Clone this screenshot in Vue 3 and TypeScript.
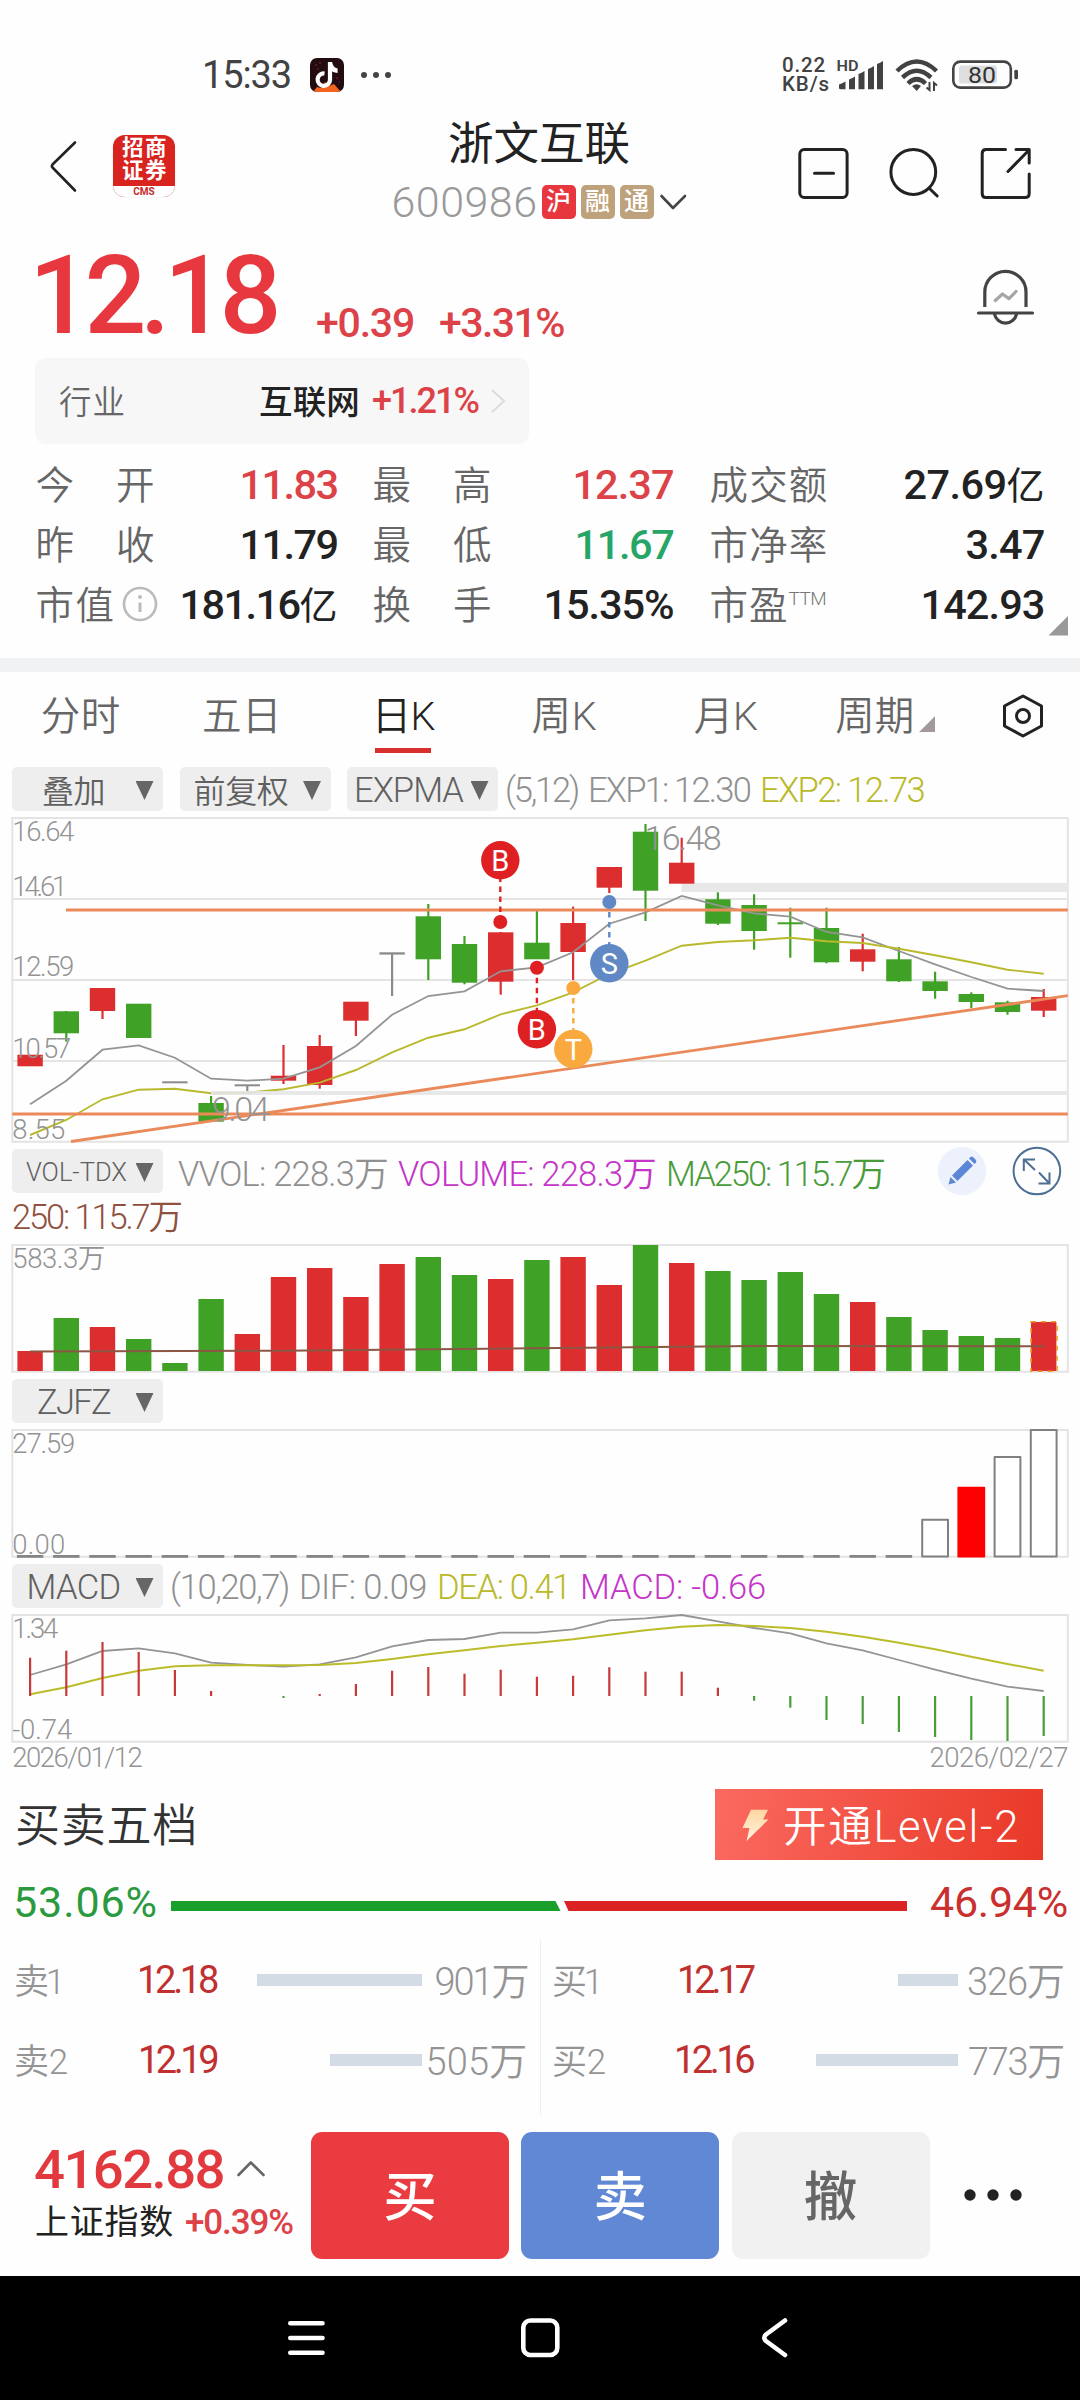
<script setup lang="ts">
import type { DirectiveBinding } from 'vue'

// Tracks text out (or in) so that it fills the given advance width.
const vFit = {
  mounted(el: HTMLElement, binding: DirectiveBinding<number>) {
    const count = [...(el.textContent ?? '')].length
    const natural = el.getBoundingClientRect().width
    el.style.letterSpacing = `${(binding.value - natural) / count}px`
  },
}

type Tone = 'up' | 'down' | 'flat'
interface Candle { tone: Tone; top: number; bottom: number; high?: number; low?: number }

const cx = (i: number): number => 30.1 + 36.2 * i
const line = (ys: number[]): string => ys.map((y, i) => `${cx(i).toFixed(1)},${y}`).join(' ')

const c = (tone: Tone, top: number, bottom: number, high?: number, low?: number): Candle => ({ tone, top, bottom, high, low })
const candles: Candle[] = [
  c('up', 1054.7, 1066.3), c('down', 1011.3, 1033.3, 1011, 1041.7), c('up', 988, 1011, 988, 1019),
  c('down', 1003.7, 1038), c('flat', 1081.3, 1083.3), c('down', 1103, 1121.7, 1096, 1121),
  c('flat', 1084.3, 1086.3, 1085, 1091), c('up', 1075.7, 1080.7, 1045, 1084), c('up', 1046, 1085, 1035, 1088.7),
  c('up', 1001.7, 1020.7, 1002, 1036), c('flat', 952.3, 954.6, 953, 996), c('down', 916.3, 959.3, 904, 980),
  c('down', 944, 982.7, 936, 984.3), c('up', 932.3, 981.7, 932, 994.7), c('down', 942.7, 959.3, 909.3, 959),
  c('up', 923, 952, 906.7, 980), c('up', 867, 887.7, 867, 893), c('down', 831.7, 890.7, 824, 921),
  c('up', 862.7, 883.7, 837.7, 883), c('down', 899.3, 923.7, 892.3, 925), c('down', 905, 931, 894.3, 949.7),
  c('down', 922.3, 924.3, 907.7, 957.7), c('down', 928, 962.3, 907.7, 963.3), c('up', 949.3, 961.7, 933.7, 971.3),
  c('down', 959.3, 981.3, 947, 982), c('down', 981.3, 991, 971.7, 998.7), c('down', 994, 1002, 992.3, 1008),
  c('down', 1002.3, 1012, 1000.7, 1014.7), c('up', 997, 1010.7, 989, 1017),
]
const exp1 = line([1104.3, 1080.7, 1049.7, 1045.3, 1057.7, 1078.7, 1080.7, 1078.7, 1067.3, 1046, 1014.7, 996, 991.3, 971.3, 967.3, 952.3, 923.7, 912.3, 896, 905.3, 913.3, 916.7, 932, 937.3, 951, 964.3, 977, 988.7, 991])
const exp2 = line([1135, 1120, 1099.3, 1089.7, 1088.7, 1093.3, 1092.7, 1089.3, 1082.7, 1070, 1052.3, 1037.7, 1029.3, 1014.3, 1005.3, 992.3, 974, 960.7, 945.7, 942, 940.3, 937.7, 941.3, 943, 948.7, 955.3, 962.3, 969.7, 973.7])

const pins = [
  { x: 500.3, y: 860.3, dot: 922, color: '#de2022', label: 'B' },
  { x: 536.9, y: 1029.3, dot: 967.7, color: '#de2022', label: 'B' },
  { x: 609.3, y: 963.3, dot: 902, color: '#5f88c4', label: 'S' },
  { x: 573.3, y: 1049, dot: 988, color: '#f9a93d', label: 'T' },
]
const priceScale = [
  { v: '16.64', y: 841.3, w: 61 }, { v: '14.61', y: 895.7, w: 54 }, { v: '12.59', y: 976.3, w: 61 },
  { v: '10.57', y: 1057.7, w: 58 }, { v: '8.55', y: 1139, w: 52 },
]

const volTops = [1351, 1318, 1327, 1339, 1363, 1299, 1334, 1277, 1268, 1297, 1264, 1257, 1275, 1279, 1260, 1257, 1285, 1245, 1263, 1271, 1280, 1272, 1294, 1302, 1317, 1330, 1336, 1338, 1322]
const volUp = new Set([0, 2, 6, 7, 8, 9, 10, 13, 15, 16, 18, 23, 28])
const zjBars = [
  { i: 25, top: 1519.7, fill: '#fff', stroke: '#808080' }, { i: 26, top: 1487.7, fill: '#f00', stroke: '#f00' },
  { i: 27, top: 1457, fill: '#fff', stroke: '#808080' }, { i: 28, top: 1430, fill: '#fff', stroke: '#808080' },
]
const hist = [1657.7, 1650.7, 1642, 1652, 1670, 1691, 1696, 1698, 1694, 1684, 1670.7, 1667, 1673.7, 1669.7, 1676.7, 1675.7, 1667.3, 1671.7, 1671.7, 1687.7, 1700.7, 1707.7, 1720, 1724, 1732, 1737, 1740, 1741, 1736]
const dif = line([1675, 1664.3, 1651, 1648.3, 1653.3, 1662.7, 1665, 1666.7, 1664.3, 1657.3, 1646.3, 1640, 1639, 1632.7, 1632.7, 1629.3, 1620.3, 1618.3, 1615, 1621.3, 1628, 1633.3, 1643.3, 1650.3, 1660, 1669.7, 1678.7, 1686.7, 1691])
const dea = line([1694.3, 1687.3, 1678, 1670.7, 1666.3, 1665.3, 1665.3, 1665.3, 1665, 1663, 1659, 1654.3, 1650.3, 1646, 1642.7, 1639.3, 1634.7, 1630.3, 1626.7, 1625, 1626, 1628, 1631.7, 1636.7, 1642.7, 1649.3, 1656.7, 1664, 1670.7])

const tabs = [
  { name: '分时', w: 80 }, { name: '五日', w: 80 }, { name: '日K', w: 63, on: true },
  { name: '周K', w: 66 }, { name: '月K', w: 64 }, { name: '周期', w: 79, more: true },
]
const books = [
  [
    { side: '卖1', sw: 48, price: '12.18', pw: 79, bar: 165, vol: '901万', vw: 93 },
    { side: '卖2', sw: 54, price: '12.19', pw: 78, bar: 92, vol: '505万', vw: 102 },
  ],
  [
    { side: '买1', sw: 48, price: '12.17', pw: 75, bar: 60, vol: '326万', vw: 97 },
    { side: '买2', sw: 54, price: '12.16', pw: 78, bar: 142, vol: '773万', vw: 96 },
  ],
]
</script>

<template>
  <div class="phone">
    <header class="status">
      <span v-fit="89" class="t clock">15:33</span>
      <svg class="app" width="34" height="34" viewBox="0 0 34 34">
        <defs><clipPath id="appclip"><rect width="34" height="34" rx="7" /></clipPath></defs>
        <g clip-path="url(#appclip)">
          <rect width="34" height="34" fill="#230c10" />
          <path d="M3 34 L7 29 L11 30 L15 24 L19 28 L24 26 L31 34 Z" fill="#f4621f" />
          <path d="M5 7h2M9 5h2M7 11h2M26 20h2M29 24h1" stroke="#8d2426" stroke-width="1" />
        </g>
        <path d="M20 4 V21.5 A6.2 6.2 0 1 1 14.5 15.5" fill="none" stroke="#fff" stroke-width="4.2" />
        <path d="M18 4 H22 Q23 9.500 27.600 10.500 V15 Q22 14.500 18.500 10.500 Z" fill="#fff" />
      </svg>
      <svg class="more-dots" width="32" height="8" viewBox="0 0 32 8" fill="#444">
        <circle cx="4" cy="4" r="3" /><circle cx="16" cy="4" r="3" /><circle cx="28" cy="4" r="3" />
      </svg>
      <div class="net">
        <span v-fit="44" class="t">0.22</span>
        <span v-fit="48" class="t">KB/s</span>
      </div>
      <svg class="signals" width="184" height="40" viewBox="836 55 184 40">
        <text x="836.5" y="70.7" font-size="15" font-weight="600" fill="#444" textLength="22" lengthAdjust="spacingAndGlyphs">HD</text>
        <g fill="#424242">
          <path d="M839 84.500 q3-1 6.500-3 V89.300 H840.500 q-1.500 0-1.500-1.500Z" />
          <path d="M849 79.500 q3-1 6-3 V89.300 H849Z" /><path d="M858.500 74 q3-1 6-3 V89.300 H858.500Z" />
          <path d="M868 69 q3-1 6-3 V89.300 H868Z" /><path d="M877 64 q3-1 6-3 V89.300 H877Z" />
        </g>
        <g fill="none" stroke="#424242" stroke-width="4.500">
          <path d="M897 71 Q916.700 52 936.500 71" /><path d="M902.500 77.500 Q916.700 64 931 77.500" />
          <path d="M908 83.500 Q916.700 75 925.500 83.500" />
        </g>
        <path d="M912 86 Q916.700 82.500 921 86 L916.700 91Z" fill="#424242" />
        <path d="M929.500 82 V90 L926.500 87.500 M934 91 V83 L937 85.500" fill="none" stroke="#424242" stroke-width="2" />
        <rect x="953.300" y="61.600" width="57.500" height="26" rx="7" fill="none" stroke="#444" stroke-width="2.600" />
        <rect x="959" y="65.500" width="38" height="18" rx="3" fill="#dedede" />
        <rect x="1014.300" y="69.700" width="3.700" height="9.600" rx="1.500" fill="#444" />
        <text x="968" y="82.600" font-size="22.500" fill="#333" textLength="28" lengthAdjust="spacingAndGlyphs">80</text>
      </svg>
    </header>

    <nav class="top">
      <svg width="30" height="54" viewBox="48 139 30 54" fill="none" stroke="#222" stroke-width="2.600" stroke-linecap="round" stroke-linejoin="round">
        <path d="M75 142.500 L52.500 164.500 Q51.200 166 52.500 167.500 L75 190.500" />
      </svg>
      <div class="broker">
        <div class="broker-cn">招商<br />证券</div>
        <div class="broker-en">CMS</div>
      </div>
      <div class="title">
        <h1 v-fit="182" class="t">浙文互联</h1>
        <div class="code">
          <span v-fit="146" class="t">600986</span>
          <i class="tag red">沪</i><i class="tag">融</i><i class="tag">通</i>
          <svg width="28" height="18" viewBox="660 193 28 18" fill="none" stroke="#444" stroke-width="2.600" stroke-linecap="round" stroke-linejoin="round"><path d="M662.500 196 L674 208 L686 196" /></svg>
        </div>
      </div>
      <svg class="acts" width="236" height="56" viewBox="797 146 236 56" fill="none" stroke="#222" stroke-width="3" stroke-linecap="round" stroke-linejoin="round">
        <rect x="799.800" y="149.500" width="47.300" height="48" rx="4.500" />
        <path d="M814.500 173.300 H833.500" />
        <circle cx="913.300" cy="172" r="22.400" /><path d="M929.500 188.500 L937.200 196" />
        <path d="M1005.500 149.500 H986 Q982.200 149.500 982.200 153.500 V193.500 Q982.200 197.500 986 197.500 H1025 Q1029.200 197.500 1029.200 193.500 V174" />
        <path d="M1016 149.500 H1029.200 V163 M1029 150 L1008 171.500" />
      </svg>
    </nav>

    <section class="quote">
      <strong v-fit="246" class="t price">12.18</strong>
      <span v-fit="98" class="t chg">+0.39</span>
      <span v-fit="125" class="t chg">+3.31%</span>
      <svg class="bell" width="62" height="62" viewBox="975 267 62 62" fill="none" stroke="#444" stroke-width="3.200" stroke-linecap="round">
        <path d="M984.800 307 V292 A20.600 20.600 0 0 1 1026 292 V307" stroke-linecap="butt" />
        <path d="M978.500 313 H1032.500" /><path d="M994.500 314 A11.200 11.200 0 0 0 1016.500 314" />
        <path d="M995.300 300.500 L1002.500 294 L1009 298.700 L1016 291.500" stroke="#a5a5a5" stroke-linejoin="round" />
      </svg>
    </section>

    <section class="industry">
      <span v-fit="67" class="t ind-l">行业</span>
      <span v-fit="101" class="t ind-n">互联网</span>
      <span v-fit="106" class="t ind-p">+1.21%</span>
      <svg width="16" height="26" viewBox="490.500 388 16 26" fill="none" stroke="#dcdcdc" stroke-width="2"><path d="M492.400 390 L504.500 401 L492.400 412.300" /></svg>
    </section>

    <section class="stats">
      <div class="col c1">
        <div><label class="wide"><b>今</b><b>开</b></label><span v-fit="98" class="t v up">11.83</span></div>
        <div><label class="wide"><b>昨</b><b>收</b></label><span v-fit="98" class="t v">11.79</span></div>
        <div>
          <label v-fit="80" class="t">市值</label>
          <svg class="info" width="38" height="38" viewBox="0 0 38 38"><circle cx="19" cy="19" r="16" fill="none" stroke="#bbb" stroke-width="2.600" /><circle cx="19" cy="12" r="2" fill="#bbb" /><path d="M19 17.500V27" stroke="#bbb" stroke-width="3" /></svg>
          <span class="v push"><span v-fit="120" class="t">181.16</span><em>亿</em></span>
        </div>
      </div>
      <div class="col c2">
        <div><label class="wide"><b>最</b><b>高</b></label><span v-fit="101" class="t v up">12.37</span></div>
        <div><label class="wide"><b>最</b><b>低</b></label><span v-fit="99" class="t v down">11.67</span></div>
        <div><label class="wide"><b>换</b><b>手</b></label><span v-fit="130" class="t v">15.35%</span></div>
      </div>
      <div class="col c3">
        <div><label v-fit="119" class="t">成交额</label><span class="v"><span v-fit="103" class="t">27.69</span><em>亿</em></span></div>
        <div><label v-fit="119" class="t">市净率</label><span v-fit="79" class="t v">3.47</span></div>
        <div><label v-fit="79" class="t">市盈</label><sup>TTM</sup><span v-fit="124" class="t v push">142.93</span></div>
      </div>
      <i class="corner"></i>
    </section>

    <div class="band"></div>

    <nav class="tabs">
      <div v-for="tab in tabs" :key="tab.name" class="tab" :class="{ on: tab.on }">
        <span v-fit="tab.w" class="t">{{ tab.name }}</span><i v-if="tab.more"></i>
      </div>
      <svg width="46" height="50" viewBox="1000.500 690.500 46 50" fill="none" stroke="#222" stroke-width="3" stroke-linejoin="round">
        <path d="M1023.500 695.500 L1042 705.500 V725.500 L1023.500 735.500 L1005 725.500 V705.500Z" /><circle cx="1023.500" cy="715.500" r="6.500" />
      </svg>
    </nav>

    <div class="bar first">
      <button><span v-fit="63" class="t">叠加</span><i></i></button>
      <button class="mid"><span v-fit="95" class="t">前复权</span><i></i></button>
      <button><span v-fit="109" class="t">EXPMA</span><i></i></button>
      <div class="legend l1">
        <span v-fit="73" class="t">(5,12)</span><span v-fit="162" class="t">EXP1: 12.30</span><span v-fit="164" class="t yel">EXP2: 12.73</span>
      </div>
    </div>

    <svg class="chart" width="1080" height="338" viewBox="0 811 1080 338">
      <path d="M12.300 818 H1067.800 V1141.700 H12.300Z M12.300 899 H1067.800 M12.300 980 H1067.800 M12.300 1061 H1067.800" class="frame" />
      <rect x="681.500" y="883" width="386.500" height="9" fill="#e8e8e8" />
      <g v-for="(k, i) in candles" :key="i" :class="k.tone">
        <rect v-if="k.high" :x="cx(i) - 1.1" :y="k.high" width="2.200" :height="k.low! - k.high" />
        <rect :x="cx(i) - 12.700" :y="k.top" width="25.400" :height="k.bottom - k.top" />
      </g>
      <polyline :points="exp1" fill="none" stroke="#949494" stroke-width="1.800" />
      <polyline :points="exp2" fill="none" stroke="#b9b92e" stroke-width="1.900" />
      <path d="M211 1093 H1067.800" stroke="#e6e6e6" stroke-width="4" opacity=".9" />
      <g stroke="#ea8a5b" stroke-width="2.800"><path d="M66 910 H1067.800" /><path d="M12.300 1114 H1067.800" /><path d="M71 1141.500 L1067.800 995.700" /></g>
      <g v-for="p in pins" :key="p.x">
        <path :d="`M${p.x} ${p.dot} V${p.y}`" :stroke="p.color" stroke-width="2.400" stroke-dasharray="5.500 4.500" />
        <circle :cx="p.x" :cy="p.dot" r="7" :fill="p.color" /><circle :cx="p.x" :cy="p.y" r="19.200" :fill="p.color" />
        <text :x="p.x" :y="p.y + 10.500" font-size="29" fill="#fff" text-anchor="middle">{{ p.label }}</text>
      </g>
      <g class="scale">
        <text v-for="s in priceScale" :key="s.v" x="12.300" :y="s.y" :textLength="s.w + 1">{{ s.v }}</text>
        <text x="212" y="1121" class="mark" textLength="57.500">9.04</text>
        <text x="644.500" y="849.700" class="mark" textLength="77">16.48</text>
      </g>
    </svg>

    <div class="bar">
      <button><span v-fit="101" class="t sm">VOL-TDX</span><i></i></button>
      <div class="legend l2">
        <span v-fit="210" class="t">VVOL: 228.3万</span><span v-fit="258" class="t mag">VOLUME: 228.3万</span><span v-fit="218" class="t grn">MA250: 115.7万</span>
      </div>
      <svg class="tools" width="126" height="50" viewBox="937 1146 126 50">
        <circle cx="962" cy="1171" r="24.200" fill="#edf1fb" />
        <g fill="#5c86d6"><path d="M948.500 1184.500 L950.500 1177 L956 1182.500Z" /><path d="M952 1175.500 L967.500 1160 L973 1165.500 L957.500 1181Z" /><path d="M969 1158.500 L970.500 1157 Q972 1156 973.500 1157.500 L975.500 1159.500 Q977 1161 976 1162.500 L974.500 1164Z" /></g>
        <g fill="none" stroke="#4c6f94" stroke-width="2"><circle cx="1036.900" cy="1171" r="23.300" /><path d="M1035 1170 L1024 1159.500 M1023.800 1171 V1159.500 H1035 M1039 1172.500 L1049.500 1183.500 M1038.500 1183.500 H1049.500 V1172.500" /></g>
      </svg>
    </div>
    <div class="line2"><span v-fit="169" class="t">250: 115.7万</span></div>

    <svg class="chart" width="1080" height="139" viewBox="0 1240 1080 139">
      <path d="M12.300 1245 H1067.800 V1371.700 H12.300Z" class="frame" />
      <rect v-for="(y, i) in volTops" :key="i" :class="volUp.has(i) ? 'up' : 'down'" :x="cx(i) - 12.700" :y="y" width="25.400" :height="1371 - y" />
      <rect x="1031" y="1321.700" width="26" height="49.600" fill="none" stroke="#ee9a24" stroke-width="1.600" stroke-dasharray="5 5" />
      <polyline points="30,1351.500 283,1350.700 536,1348.300 754,1346 1044,1346.300" fill="none" stroke="#8c5645" stroke-width="2" />
      <text x="12.300" y="1268" class="scale" textLength="93">583.3万</text>
    </svg>

    <div class="bar"><button><span v-fit="73" class="t">ZJFZ</span><i></i></button></div>
    <svg class="chart" width="1080" height="141" viewBox="0 1423 1080 141">
      <path d="M12.300 1430 H1067.800 V1556.700 H12.300Z" class="frame" />
      <g class="scale"><text x="12.300" y="1452.700" textLength="63">27.59</text><text x="12.300" y="1554" textLength="53">0.00</text></g>
      <rect v-for="i in 25" :key="i" :x="cx(i - 1) - 13.200" y="1555" width="26.400" height="2.800" fill="#858585" />
      <rect v-for="b in zjBars" :key="b.i" :x="cx(b.i) - 12.900" :y="b.top" width="25.800" :height="1556.500 - b.top" :fill="b.fill" :stroke="b.stroke" stroke-width="2" stroke-linejoin="round" />
    </svg>

    <div class="bar">
      <button><span v-fit="94" class="t">MACD</span><i></i></button>
      <div class="legend l3">
        <span v-fit="119" class="t">(10,20,7)</span><span v-fit="128" class="t">DIF: 0.09</span><span v-fit="133" class="t yel">DEA: 0.41</span><span v-fit="186" class="t mag">MACD: -0.66</span>
      </div>
    </div>
    <svg class="chart" width="1080" height="169" viewBox="0 1608 1080 169">
      <path d="M12.300 1615 H1067.800 V1741.700 H12.300Z" class="frame" />
      <polyline :points="dif" fill="none" stroke="#949494" stroke-width="1.800" />
      <polyline :points="dea" fill="none" stroke="#bcbc2a" stroke-width="2" />
      <path v-for="(y, i) in hist" :key="i" :d="`M${cx(i)} 1696 V${y}`" :stroke="y < 1696 ? '#c53a3a' : '#4a9c3b'" stroke-width="2.200" />
      <g class="scale">
        <text x="12.300" y="1638" textLength="46">1.34</text><text x="12.300" y="1738.500" textLength="60">-0.74</text>
        <text x="12.300" y="1767" textLength="130.500">2026/01/12</text><text x="929.500" y="1767" textLength="139">2026/02/27</text>
      </g>
    </svg>

    <section class="five">
      <h2 v-fit="183" class="t">买卖五档</h2>
      <button class="level">
        <svg width="28" height="34" viewBox="740 1809 28 34"><defs><linearGradient id="bolt" x1="0" y1="0" x2="0" y2="1"><stop offset="0" stop-color="#ffd7a0" /><stop offset="1" stop-color="#fff3df" /></linearGradient></defs><path d="M750 1810.700 H767 L762 1820.500 H767.500 L745.500 1842 L748.500 1829 H741.500Z" fill="url(#bolt)" /></svg>
        <span v-fit="237" class="t">开通Level-2</span>
      </button>
    </section>

    <section class="ratio">
      <span v-fit="145" class="t buy">53.06%</span>
      <svg width="738" height="10" viewBox="170 1901 738 10"><path d="M171 1901 H555.500 L560.500 1911 H171Z" fill="#19a02c" /><path d="M564 1901 H907 V1911 H568.500Z" fill="#dc2323" /></svg>
      <span v-fit="138" class="t sell">46.94%</span>
    </section>

    <section class="books">
      <div v-for="(book, b) in books" :key="b" class="book">
        <div v-for="r in book" :key="r.side" class="level-row">
          <span class="side"><span v-fit="r.sw" class="t">{{ r.side }}</span></span>
          <span class="cost"><span v-fit="r.pw" class="t">{{ r.price }}</span></span>
          <i :style="{ width: r.bar + 'px' }"></i>
          <span class="qty"><span v-fit="r.vw" class="t">{{ r.vol }}</span></span>
        </div>
      </div>
    </section>

    <footer class="trade">
      <div class="index">
        <div class="idx-top"><span v-fit="190" class="t">4162.88</span><svg width="30" height="18" viewBox="235.500 2161 30 18" fill="none" stroke="#666" stroke-width="2.600" stroke-linejoin="round" stroke-linecap="round"><path d="M238 2176 L250.300 2163.500 L263 2176" /></svg></div>
        <div class="idx-bot"><span v-fit="139" class="t cn">上证指数</span><span v-fit="108" class="t pct">+0.39%</span></div>
      </div>
      <button class="b">买</button><button class="s">卖</button><button class="w">撤</button>
      <svg width="60" height="14" viewBox="963 2188 60 14" fill="#222"><circle cx="970" cy="2195" r="5.700" /><circle cx="993" cy="2195" r="5.700" /><circle cx="1016" cy="2195" r="5.700" /></svg>
    </footer>

    <div class="sys">
      <svg width="1080" height="124" viewBox="0 2276 1080 124" fill="none" stroke="#fff" stroke-width="4.600" stroke-linecap="round" stroke-linejoin="round">
        <path d="M290.300 2323.300 H322.500 M290.300 2338 H322.500 M290.300 2352.700 H322.500" />
        <rect x="523.300" y="2320.500" width="34" height="34.500" rx="7" />
        <path d="M785 2320.500 L766 2334.500 Q762.500 2337.700 766 2341 L785 2355" />
      </svg>
    </div>
  </div>
</template>

<style>
body { margin: 0; background: #fff; }
</style>

<style scoped>
.phone { width: 1080px; height: 2400px; overflow: hidden; display: flex; flex-direction: column; background: #fefefe; color: #222; font-family: Roboto, "Noto Sans CJK SC", sans-serif; }
.phone > * { flex: none; box-sizing: border-box; }
.t { display: inline-block; white-space: nowrap; flex: none; }
button { border: 0; padding: 0; margin: 0; font: inherit; color: inherit; background: none; }
h1, h2 { margin: 0; font-weight: 400; }
i, em { font-style: normal; }
svg { display: block; flex: none; }

.status { height: 110px; padding: 40px 60px 0 202px; display: flex; align-items: center; color: #424242; }
.clock { font-size: 38px; }
.app { margin-left: 19px; }
.more-dots { margin-left: 16px; }
.net { margin: 0 6px 0 390px; width: 48px; flex: none; display: flex; flex-direction: column; font-size: 20.500px; line-height: 19px; font-weight: 500; align-items: flex-start; }

.top { height: 130px; padding-left: 48px; display: flex; align-items: flex-start; }
.top > svg:first-child { margin-top: 29px; }
.broker { width: 62px; height: 62px; margin: 25px 0 0 35px; border-radius: 12px; overflow: hidden; background: #d8231f; box-shadow: 0 0 1px #bbb; display: flex; flex-direction: column; justify-content: space-between; text-align: center; color: #fff; }
.broker-cn { font-size: 21.500px; line-height: 22.500px; letter-spacing: 1.500px; font-weight: 700; padding: 2px 0 0 2px; }
.broker-en { height: 11px; background: #fff; color: #c42a2a; font-size: 10px; line-height: 11px; font-weight: 700; letter-spacing: 0; }
.title { width: 302px; margin-left: 213px; display: flex; flex-direction: column; align-items: center; }
.title h1 { font-size: 45.500px; line-height: 64px; margin-top: 3px; }
.code { display: flex; align-items: center; height: 34px; margin-top: 8px; font-size: 43px; color: #999; font-weight: 300; }
.tag { width: 34px; height: 34px; border-radius: 5px; background: #bea27c; color: #fff; font-size: 25px; line-height: 33px; text-align: center; margin-left: 5px; font-weight: 500; }
.tag.red { background: #e8363f; margin-left: 4px; }
.code svg { margin-left: 5px; }
.acts { margin: 36px 0 0 107px; }

.quote { height: 118px; padding-left: 29px; display: flex; align-items: flex-start; color: #e8383f; }
.price { font-size: 109px; line-height: 112px; font-weight: 500; }
.chg { font-size: 41px; line-height: 48px; margin: 59px 0 0 41px; font-weight: 500; color: #dc4248; }
.chg + .chg { margin-left: 25px; }
.bell { margin: 27px 0 0 411px; }

.industry { width: 494px; height: 86px; margin: 0 0 10px 35px; padding: 0 24px; border-radius: 11px; background: #f7f7f7; display: flex; align-items: center; }
.ind-l { font-size: 32.500px; color: #666; font-weight: 350; padding-bottom: 4px; }
.ind-n { font-size: 33.500px; font-weight: 500; margin-left: 133px; padding-bottom: 3px; }
.ind-p { font-size: 36px; font-weight: 500; color: #dc4248; margin-left: 12px; }
.industry svg { margin-left: 12px; }

.stats { height: 204px; padding-left: 35.500px; display: flex; position: relative; }
.col > div { height: 60px; display: flex; align-items: center; justify-content: space-between; }
.c1 { width: 302px; } .c2 { width: 301px; margin-left: 35px; } .c3 { width: 335px; margin-left: 36px; }
label { font-size: 38.500px; color: #666; font-weight: 350; padding-bottom: 5px; }
.wide { width: 119px; display: flex; justify-content: space-between; }
.wide b { font-weight: 350; }
.v { font-size: 41.500px; font-weight: 500; white-space: nowrap; display: inline-flex; align-items: center; }
.v em { font-size: 38px; font-weight: 400; padding-bottom: 4px; }
.up { color: #dc4248; fill: #dc2e2f; } .down { color: #27a567; fill: #3fa226; } .flat { fill: #8a8a8a; }
.info { margin-left: 5px; } .push { margin-left: auto; }
sup { font-size: 19px; color: #777; font-weight: 300; line-height: 20px; margin-bottom: 10px; letter-spacing: -.5px; }
.corner { position: absolute; left: 1048.500px; top: 162px; width: 19.500px; height: 19.500px; background: #999; clip-path: polygon(100% 0, 100% 100%, 0 100%); }

.band { height: 14px; background: #f1f2f4; }

.tabs { height: 95px; display: flex; align-items: flex-start; }
.tab { width: 161.300px; height: 81px; box-sizing: border-box; padding-top: 15px; display: flex; justify-content: center; position: relative; font-size: 39.500px; line-height: 60px; color: #666; font-weight: 350; }
.tab.on { color: #222; }
.tab.on::after { content: ""; position: absolute; left: 52.500px; bottom: 0; width: 56px; height: 5px; background: #d8302f; }
.tab:nth-child(6) { padding-right: 4px; }
.tab i { align-self: flex-start; margin: 29px 0 0 5px; width: 16px; height: 16px; background: #a29a9a; clip-path: polygon(100% 0, 100% 100%, 0 100%); }
.tabs > svg { margin: 18.500px 0 0 32.500px; }

.bar { height: 44px; padding-left: 12px; display: flex; align-items: center; font-size: 34.500px; font-weight: 350; color: #606060; }
.bar button { width: 151px; height: 44px; flex: none; border-radius: 5px; background: #eee; display: flex; align-items: center; justify-content: center; position: relative; padding: 1px 28px 0 0; box-sizing: border-box; }
.first button:nth-child(1), .first button:nth-child(2) { font-size: 32px; padding-top: 0; }
.first button + button { margin-left: 16.500px; }
.bar button i { position: absolute; right: 9.500px; top: 14px; width: 18px; height: 19px; background: #666; clip-path: polygon(0 0, 100% 0, 50% 100%); }
.bar button .sm { font-size: 25.500px; margin-left: 6px; }
.legend { display: flex; gap: 10px; color: #909090; padding-top: 1px; }
.l1 { margin-left: 7px; } .l2 { margin-left: 15px; padding-top: 0; } .l3 { margin-left: 7px; }
.yel { color: #b9b92a; } .mag { color: #c436c8; } .grn { color: #4a9c3b; }
.tools { margin-left: 53px; }
.line2 { height: 47px; padding-left: 12px; font-size: 34.500px; line-height: 48px; color: #8f5040; font-weight: 350; }

.frame { fill: none; stroke: #e4e4e4; stroke-width: 2; }
.scale { font-size: 27.500px; fill: #949494; font-weight: 350; }
.mark { font-size: 34px; }

.five { height: 98px; padding: 0 37px 3px 15px; display: flex; align-items: center; justify-content: space-between; }
.five h2 { font-size: 45px; color: #333; padding-bottom: 4px; font-weight: 350; }
.level { width: 328px; height: 71px; background: linear-gradient(100deg, #fb6a60, #e93827); color: #fff; display: flex; align-items: center; font-size: 43.500px; padding-left: 26px; font-weight: 350; }
.level span { margin-left: 14px; padding-bottom: 3px; }

.ratio { height: 65px; padding: 0 12px 11px 13px; display: flex; align-items: center; font-size: 43px; }
.ratio svg { margin: 7px 22px 0 12px; }
.buy { color: #2b9a3e; } .sell { color: #c9302f; }

.books { height: 175px; display: flex; }
.book { width: 540px; box-sizing: border-box; padding-left: 14px; }
.book + .book { width: 540px; padding-left: 11px; border-left: 1px solid #eee; }
.level-row { height: 80px; display: flex; align-items: center; font-size: 38px; color: #949494; font-weight: 350; }
.side { width: 90px; font-size: 35px; padding-bottom: 3px; }
.cost { width: 112px; text-align: right; color: #c0302e; font-weight: 400; }
.book + .book .cost { width: 110px; }
.level-row i { height: 12px; margin-left: auto; background: #d3dbe4; }
.qty { width: 106px; text-align: right; margin-right: 12.500px; padding-bottom: 3px; }
.book + .book .qty { margin-right: 16px; }

.trade { height: 161px; padding: 17px 0 0 35px; display: flex; align-items: flex-start; }
.index { width: 276px; flex: none; }
.idx-top { display: flex; align-items: center; font-size: 54.500px; line-height: 64px; height: 70px; font-weight: 500; color: #e2393f; padding-top: 2px; margin-bottom: -2px; }
.idx-top span { margin-left: -1px; }
.idx-top svg { margin-left: 12px; }
.idx-bot { display: flex; align-items: center; height: 40px; font-size: 34px; }
.cn { padding-bottom: 5px; }
.pct { font-size: 35px; font-weight: 500; color: #dc4248; margin-left: 11px; }
.trade button { width: 198px; height: 127px; padding-bottom: 6px; border-radius: 11px; font-size: 53.500px; font-weight: 500; color: #fff; margin-right: 12.300px; }
.trade .b { background: #e93b40; } .trade .s { background: #6088d4; } .trade .w { background: #f1f1f1; color: #666; }
.trade > svg { margin: 56px 0 0 21.500px; }
.sys { height: 124px; background: #000; }
</style>
